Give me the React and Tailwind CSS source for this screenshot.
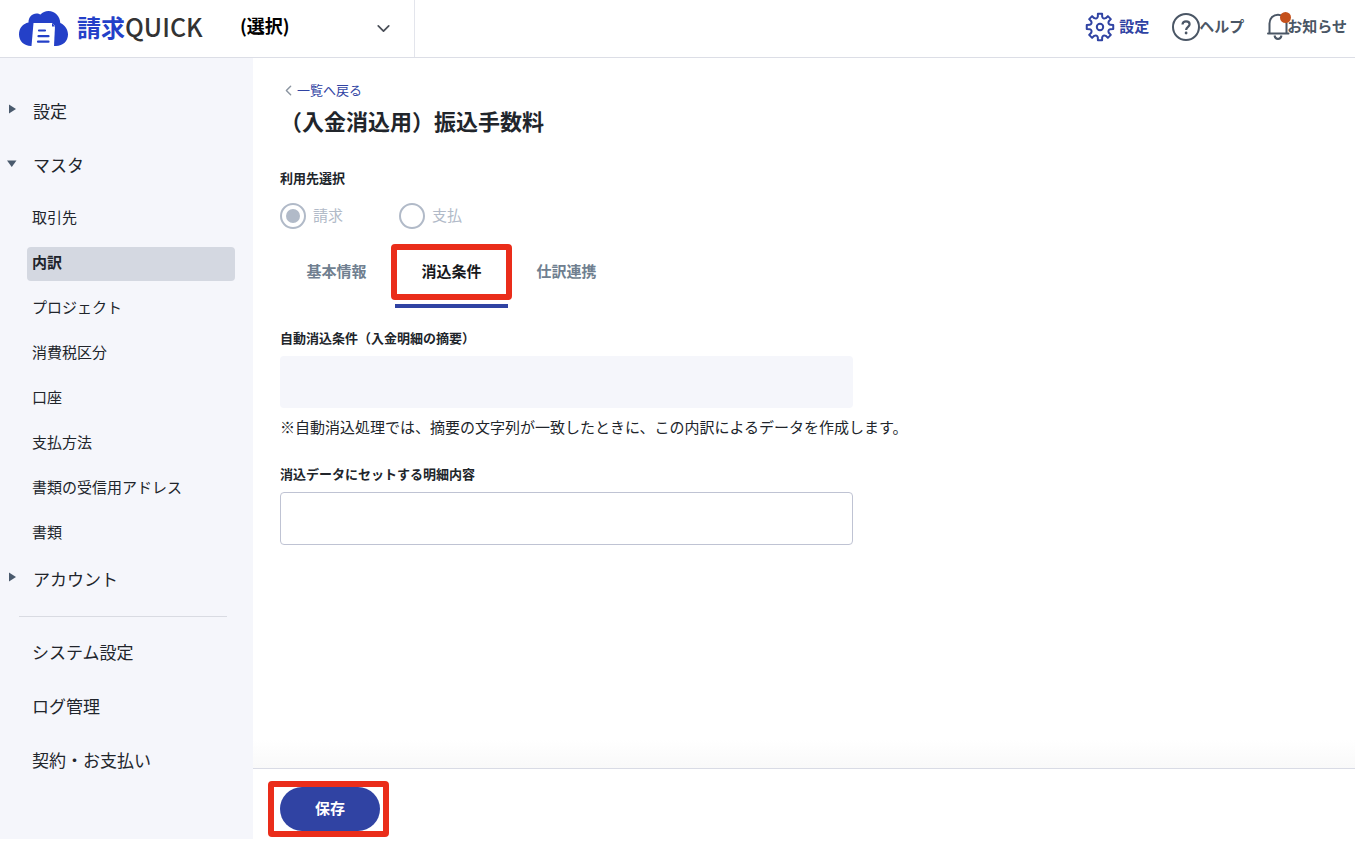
import { useState } from 'react';
import { clsx } from 'clsx';
import { FiChevronDown, FiChevronLeft } from 'react-icons/fi';

const MASTER_ITEMS = [
  '取引先', '内訳', 'プロジェクト', '消費税区分', '口座', '支払方法', '書類の受信用アドレス', '書類',
];

const SYSTEM_ITEMS = ['システム設定', 'ログ管理', '契約・お支払い'];

const TABS = ['基本情報', '消込条件', '仕訳連携'];

export default function App() {
  return (
    <div className="flex min-h-screen flex-col bg-white font-['Noto_Sans_CJK_JP',sans-serif] text-[#21252b]">
      <Header />
      <div className="flex flex-1 pb-0.5">
        <Sidebar />
        <ItemForm />
      </div>
    </div>
  );
}

function Header() {
  return (
    <header className="flex h-[58px] shrink-0 items-stretch justify-between border-b border-[#dcdee6]">
      <div className="flex">
        <a href="#" className="flex w-[232px] items-center gap-[9px] pl-[19px]">
          <CloudLogo />
          <span className="flex items-center pb-1 leading-none whitespace-nowrap">
            <span className="text-[24px] font-bold text-[#2440c8]">請求</span>
            <span className="text-[25px] font-medium text-[#333]">QUICK</span>
          </span>
        </a>
        <div className="relative flex w-[183px] items-center border-r border-[#e3e5ec]">
          <select aria-label="事業所" className="h-full w-full appearance-none bg-transparent pb-1.5 pl-2 text-[18px] font-bold text-black">
            <option>(選択)</option>
          </select>
          <FiChevronDown size={21} className="pointer-events-none absolute right-5 text-[#4a4f58]" />
        </div>
      </div>
      <nav className="flex items-center gap-[23px] pr-2 pb-[3px] text-[15px] font-bold text-[#4a5665]">
        <a href="#" className="flex items-center gap-1 text-[#3043a3]"><GearIcon /><span className="pb-0.5">設定</span></a>
        <a href="#" className="flex items-center"><HelpIcon /><span className="pb-0.5">ヘルプ</span></a>
        <a href="#" className="flex items-center"><BellIcon /><span className="pb-0.5">お知らせ</span></a>
      </nav>
    </header>
  );
}

function Sidebar() {
  const [current, setCurrent] = useState('内訳');

  return (
    <aside className="w-[253px] shrink-0 bg-[#f5f6fb] pt-[26px] text-[17px]">
      <SidebarGroup label="設定" />
      <SidebarGroup label="マスタ" open />
      <ul className="flex flex-col gap-[11px] pt-2.5 pr-[18px] pb-px pl-[27px] text-[15px]">
        {MASTER_ITEMS.map((item) => (
          <li key={item}>
            <a
              href="#"
              onClick={() => setCurrent(item)}
              className={clsx('flex h-[34px] items-center rounded pb-1 pl-[5px]', item === current && 'bg-[#d4d8e1] font-bold')}
            >
              {item}
            </a>
          </li>
        ))}
      </ul>
      <SidebarGroup label="アカウント" />
      <hr className="mt-2.5 mr-[26px] mb-2 ml-[19px] border-[#d9dbe2]" />
      {SYSTEM_ITEMS.map((item) => (
        <a key={item} href="#" className="flex h-[54px] items-center pl-8">{item}</a>
      ))}
    </aside>
  );
}

function SidebarGroup({ label, open = false }) {
  return (
    <button type="button" aria-expanded={open} className="flex h-[54px] w-full items-center pl-[7px]">
      <svg width="26" height="16" viewBox="0 0 26 16" className="mb-1 text-[#4a5a6d]" fill="currentColor">
        <path d={open ? 'M0 5.5H9.500L4.750 12Z' : 'M2 3.500V12.500L9 8Z'} />
      </svg>
      {label}
    </button>
  );
}

function ItemForm() {
  const [tab, setTab] = useState('消込条件');

  return (
    <main className="flex min-w-0 flex-1 flex-col">
      <div className="flex-1 px-[27px] pt-[22px]">
        <a href="#" className="flex h-5 items-center text-[13px] text-[#3043a3]">
          <FiChevronLeft size={17} className="text-[#8b95a1]" />
          一覧へ戻る
        </a>
        <h1 className="mt-1 text-[22px] leading-8 font-bold">（入金消込用）振込手数料</h1>

        <fieldset className="mt-8" disabled>
          <legend className="text-[13px] leading-5 font-bold">利用先選択</legend>
          <div className="mt-[15px] flex gap-14">
            <TargetRadio label="請求" defaultChecked />
            <TargetRadio label="支払" />
          </div>
        </fieldset>

        <div role="tablist" className="mt-[7px] flex gap-0.5 text-[15px] font-bold text-[#707f90]">
          {TABS.map((name) => (
            <button
              key={name}
              type="button"
              role="tab"
              aria-selected={tab === name}
              onClick={() => setTab(name)}
              className={clsx(
                'relative h-[72px] w-[113px] border-b-4 pt-0.5',
                tab === name ? 'border-[#3043a3] text-[#16181c]' : 'border-transparent',
              )}
            >
              {name}
              {name === '消込条件' && <Marker className="top-2 -right-1 -left-1 h-14" />}
            </button>
          ))}
        </div>

        <label htmlFor="condition" className="mt-5 block text-[13px] leading-5 font-bold">
          自動消込条件（入金明細の摘要）
        </label>
        <input id="condition" disabled className="mt-2 block h-[52px] w-full max-w-[573px] rounded bg-[#f5f6fb] px-4 text-[15px]" />
        <p className="mt-2 text-[15px] leading-[22px]">
          ※自動消込処理では、摘要の文字列が一致したときに、この内訳によるデータを作成します。
        </p>

        <label htmlFor="detail" className="mt-[26px] block text-[13px] leading-5 font-bold">
          消込データにセットする明細内容
        </label>
        <input id="detail" className="mt-2 block h-[53px] w-full max-w-[573px] rounded border border-[#bfc3d3] px-4 text-[15px]" />
      </div>

      <div className="h-7 bg-linear-to-b from-white to-[#f9f9f9]" />
      <footer className="border-t border-[#d9dbe5] px-[27px] pt-[18px] pb-2">
        <div className="relative w-[100px]">
          <button type="submit" className="h-11 w-full rounded-full bg-[#3043a3] pb-0.5 text-[15px] font-bold text-white">
            保存
          </button>
          <Marker className="-inset-x-3 -top-1.5 h-14 w-[121px]" />
        </div>
      </footer>
    </main>
  );
}

function TargetRadio({ label, defaultChecked }) {
  return (
    <label className="flex items-center gap-[7px] text-[15px] text-[#b1bac8]">
      <input
        type="radio"
        name="target"
        defaultChecked={defaultChecked}
        className="size-[26px] appearance-none rounded-full border-2 border-[#b1bac8] bg-white bg-clip-content p-1 checked:bg-[#b1bac8]"
      />
      <span className="pb-0.5 leading-6">{label}</span>
    </label>
  );
}

// Red frame that points out a control
function Marker({ className }) {
  return <span className={clsx('pointer-events-none absolute rounded border-6 border-[#ea2d1a]', className)} />;
}

function CloudLogo() {
  return (
    <svg width="49" height="35" viewBox="0 0 49 35" className="shrink-0">
      <path
        fill="#2440c8"
        d="M12 35C5 35 0 30 0 23.500C0 17 4 12.500 9.500 11.500C9.500 6 13 2.500 17.500 2.500C19 2.500 20.500 3 21.500 3.500C23.500 1.200 26.300 0 29.500 0C36 0 41 5 41.300 12C46 14 49 18.500 49 23.500C49 30 44 35 37 35Z"
      />
      <path fill="#fff" d="M14.500 12H33L36 15L35 35H12.500Z" />
      <path fill="#2440c8" d="M33 12L36 15.500H33Z" />
      <path stroke="#2440c8" strokeWidth="2.200" strokeLinecap="round" d="M20 19.500H26M19.500 25.200H29.500M19 30.700H29.500" />
    </svg>
  );
}

// Outline of an eight-toothed wheel around (15, 15)
function gearPath() {
  const at = (deg, r) => {
    const rad = (deg * Math.PI) / 180;
    return `${(15 + r * Math.cos(rad)).toFixed(2)} ${(15 + r * Math.sin(rad)).toFixed(2)}`;
  };
  const teeth = Array.from({ length: 8 }, (_, i) => {
    const a = i * 45;
    return `${i ? 'L' : 'M'}${at(a - 12, 10.5)}L${at(a - 9, 13.4)}L${at(a + 9, 13.4)}L${at(a + 12, 10.5)}Q${at(a + 22.5, 8.2)} ${at(a + 33, 10.5)}`;
  });
  return `${teeth.join('')}Z`;
}

function GearIcon() {
  return (
    <svg width="30" height="30" viewBox="0 0 30 30" fill="none" stroke="currentColor" strokeWidth="2" strokeLinejoin="round">
      <path d={gearPath()} />
      <circle cx="15" cy="15" r="3.200" />
    </svg>
  );
}

function HelpIcon() {
  return (
    <svg width="27" height="30" viewBox="0 0 27 30" fill="none" stroke="currentColor" strokeWidth="2" className="overflow-visible">
      <circle cx="14" cy="15" r="13" />
      <path strokeWidth="2.200" d="M10.500 12.500C10.500 10.500 12 9.300 14 9.300C16.200 9.300 17.600 10.600 17.600 12.300C17.600 14.700 14.100 15 14.100 18" />
      <circle cx="14.100" cy="21" r="1.400" fill="currentColor" stroke="none" />
    </svg>
  );
}

function BellIcon() {
  return (
    <svg width="20" height="30" viewBox="0 0 20 30" fill="none" stroke="currentColor" strokeWidth="2" className="overflow-visible">
      <path d="M2.500 21V11.500C2.500 6 6.500 2.800 11 2.800C15.500 2.800 19.500 6 19.500 11.500V21" />
      <path strokeLinecap="round" d="M1 21.500H21.500" />
      <path d="M7.500 23.500C8 26 9.300 27 11 27C12.700 27 14 26 14.500 23.500" />
      <circle cx="18.500" cy="5.500" r="5.500" fill="#c4501b" stroke="none" />
    </svg>
  );
}
